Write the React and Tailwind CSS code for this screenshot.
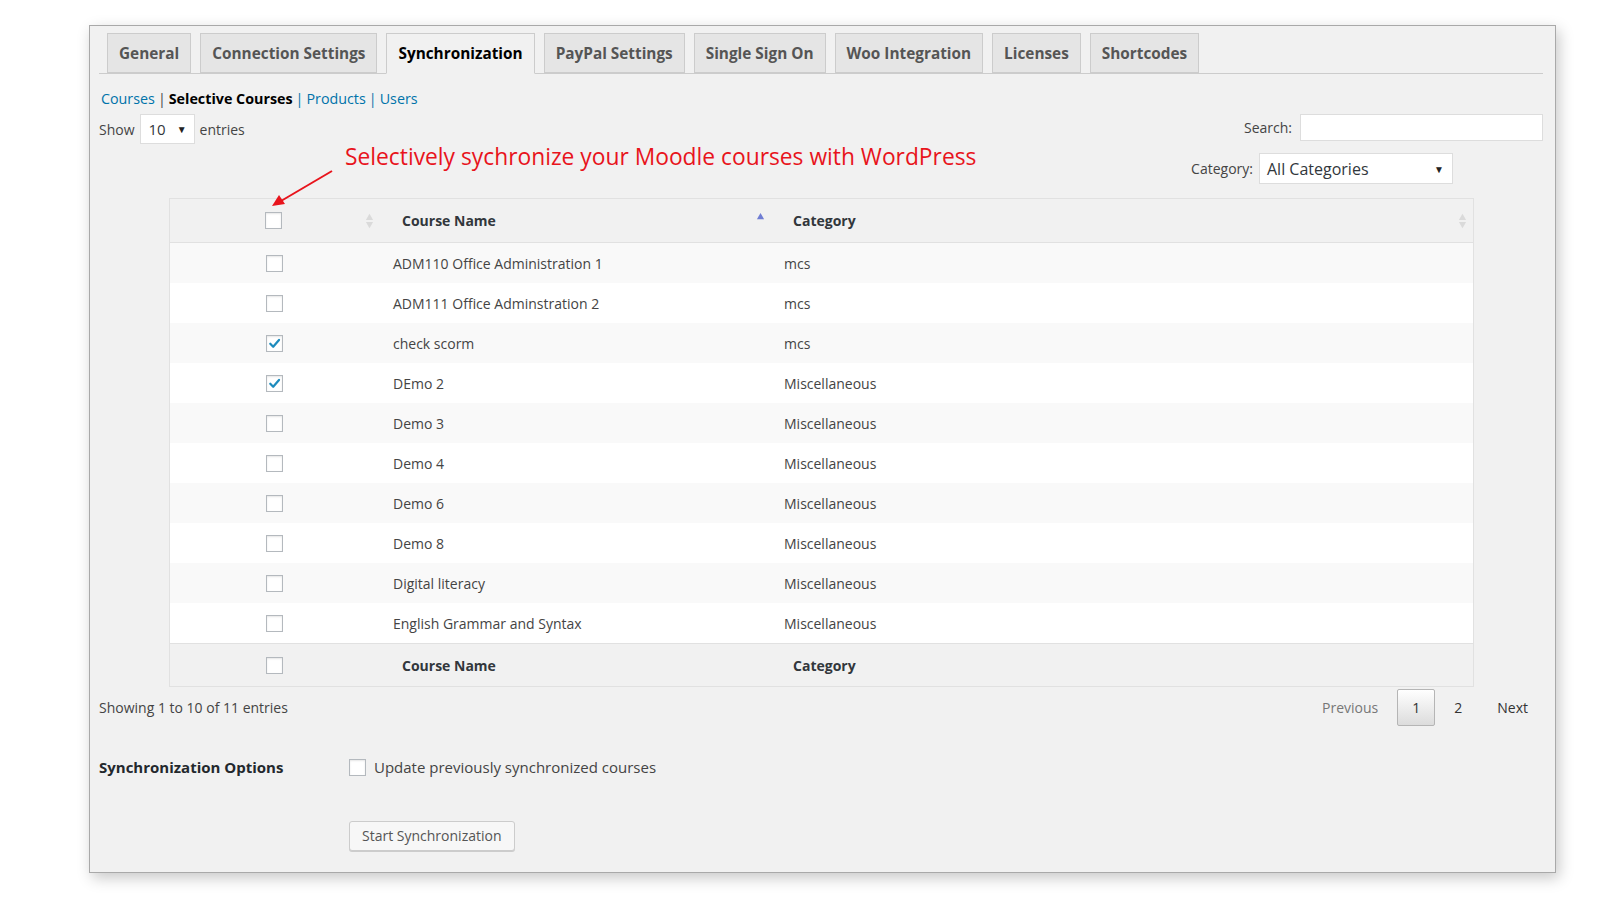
import React from 'react';

const courses = [
  { name: 'ADM110 Office Administration 1', category: 'mcs', checked: false },
  { name: 'ADM111 Office Adminstration 2', category: 'mcs', checked: false },
  { name: 'check scorm', category: 'mcs', checked: true },
  { name: 'DEmo 2', category: 'Miscellaneous', checked: true },
  { name: 'Demo 3', category: 'Miscellaneous', checked: false },
  { name: 'Demo 4', category: 'Miscellaneous', checked: false },
  { name: 'Demo 6', category: 'Miscellaneous', checked: false },
  { name: 'Demo 8', category: 'Miscellaneous', checked: false },
  { name: 'Digital literacy', category: 'Miscellaneous', checked: false },
  { name: 'English Grammar and Syntax', category: 'Miscellaneous', checked: false },
];

const tabs = ['General', 'Connection Settings', 'Synchronization', 'PayPal Settings', 'Single Sign On', 'Woo Integration', 'Licenses', 'Shortcodes'];

function Checkbox({ checked }) {
  return (
    <span className="flex h-[17px] w-[17px] items-center justify-center border border-[#b4b9be] bg-white shadow-[inset_0_1px_2px_rgba(0,0,0,0.1)]">
      {checked && (
        <svg viewBox="0 0 16 16" className="h-[15px] w-[15px]">
          <path d="M3.5 8.2 L6.6 11.4 L12.8 4.2" stroke="#1e8cbe" strokeWidth="2.4" fill="none" strokeLinecap="round" strokeLinejoin="round" />
        </svg>
      )}
    </span>
  );
}

function SortBoth() {
  return (
    <svg viewBox="0 0 10 20" className="h-[18px] w-[9px]">
      <path d="M5 2 L9 9 L1 9 Z" fill="#dadada" />
      <path d="M5 18 L9 11 L1 11 Z" fill="#dadada" />
    </svg>
  );
}

function SortAsc() {
  return (
    <svg viewBox="0 0 10 10" className="h-[9px] w-[9px]">
      <path d="M5 1 L9 8 L1 8 Z" fill="#6f7dd3" />
    </svg>
  );
}

function Caret() {
  return <span className="text-[10px] leading-none text-[#222]">▼</span>;
}

export default function App() {
  return (
    <div className="min-h-screen bg-white pl-[89px] pt-[25px] font-['Open_Sans',sans-serif] text-[#444]">
      <div className="relative h-[848px] w-[1467px] border border-[#a9a9a9] bg-[#f1f1f1] pl-[9px] pr-[12px] pt-[8px] shadow-[3px_5px_14px_rgba(0,0,0,0.22)]">
        {/* tabs */}
        <div className="flex h-[40px] items-end border-b border-[#ccc] pl-[8px]">
          {tabs.map((tab) => {
            const active = tab === 'Synchronization';
            return (
              <div
                key={tab}
                className={`mr-[9px] flex h-[40px] items-center border border-[#ccc] px-[11px] pt-[1px] text-[15.35px] font-bold ${active ? '-mb-px h-[41px] border-b-[#f1f1f1] bg-[#f1f1f1] text-[#000]' : 'bg-[#e5e5e5] text-[#555]'}`}
              >
                {tab}
              </div>
            );
          })}
        </div>

        {/* sub navigation */}
        <div className="mt-[15px] flex h-[20px] items-center pl-[2px] text-[14.3px]">
          <span className="text-[#0073aa]">Courses</span>
          <span className="mx-[3px] text-[#444]">|</span>
          <span className="font-bold text-[#000]">Selective Courses</span>
          <span className="mx-[3px] text-[#0073aa]">|</span>
          <span className="text-[#0073aa]">Products</span>
          <span className="mx-[3px] text-[#0073aa]">|</span>
          <span className="text-[#0073aa]">Users</span>
        </div>

        {/* show / search */}
        <div className="mt-[5px] flex items-start justify-between text-[14px]">
          <div className="flex items-center gap-[5px]">
            <span>Show</span>
            <div className="flex h-[30px] w-[55px] items-center justify-between border border-[#ddd] bg-white pl-[8px] pr-[7px] text-[15px] text-[#32373c]">
              <span>10</span>
              <Caret />
            </div>
            <span>entries</span>
          </div>
          <div className="flex items-center gap-[8px]">
            <span>Search:</span>
            <div className="h-[27px] w-[243px] border border-[#ddd] bg-white" />
          </div>
        </div>

        {/* annotation + category */}
        <div className="relative flex items-start justify-between">
          <span className="ml-[246px] text-[22.8px] leading-[26px] text-[#e8141c]">Selectively sychronize your Moodle courses with WordPress</span>
          <div className="mr-[90px] mt-[9px] flex items-center gap-[6px] text-[14px]">
            <span>Category:</span>
            <div className="flex h-[31px] w-[194px] items-center justify-between border border-[#ddd] bg-white pl-[7px] pr-[8px] text-[16px] text-[#32373c]">
              <span>All Categories</span>
              <Caret />
            </div>
          </div>
          <svg className="absolute left-[170px] top-[25px] h-[40px] w-[70px]" viewBox="0 0 70 40">
            <line x1="63" y1="2" x2="12" y2="32" stroke="#e8141c" strokeWidth="2" />
            <path d="M3 37 L10 26 L16 35 Z" fill="#e8141c" />
          </svg>
        </div>

        {/* table */}
        <div className="ml-[70px] mr-[69px] mt-[14px] border border-[#e1e1e1] text-[14px]">
          <div className="flex h-[44px] items-stretch border-b border-[#e1e1e1] bg-[#f1f1f1] font-bold text-[#32373c]">
            <div className="flex w-[209px] items-center justify-between pl-[95px] pr-[5px]">
              <Checkbox />
              <SortBoth />
            </div>
            <div className="relative flex w-[392px] items-center pl-[23px]">
              <span>Course Name</span>
              <span className="absolute right-[6px] top-[13px] flex"><SortAsc /></span>
            </div>
            <div className="flex flex-1 items-center justify-between pl-[22px] pr-[6px]">
              <span>Category</span>
              <SortBoth />
            </div>
          </div>

          {courses.map((course, index) => (
            <div key={course.name} className={`flex h-[40px] items-center ${index % 2 === 0 ? 'bg-[#f9f9f9]' : 'bg-white'}`}>
              <div className="flex w-[209px] justify-center">
                <Checkbox checked={course.checked} />
              </div>
              <div className="w-[392px] pl-[14px]">{course.name}</div>
              <div className="flex-1 pl-[13px]">{course.category}</div>
            </div>
          ))}

          <div className="flex h-[43px] items-center border-t border-[#e1e1e1] bg-[#f1f1f1] font-bold text-[#32373c]">
            <div className="flex w-[209px] justify-center">
              <Checkbox />
            </div>
            <div className="w-[392px] pl-[23px]">Course Name</div>
            <div className="flex-1 pl-[22px]">Category</div>
          </div>
        </div>

        {/* info + pagination */}
        <div className="mt-[2px] flex items-center justify-between text-[14px]">
          <span>Showing 1 to 10 of 11 entries</span>
          <div className="mr-[15px] flex items-center">
            <span className="mr-[19px] text-[#777]">Previous</span>
            <span className="flex h-[37px] w-[38px] items-center justify-center rounded-[2px] border border-[#b5b5b5] bg-gradient-to-b from-white to-[#dcdcdc] text-[#333]">1</span>
            <span className="ml-[19px] mr-[35px] text-[#333]">2</span>
            <span className="text-[#333]">Next</span>
          </div>
        </div>

        {/* synchronization options */}
        <div className="mt-[30px] flex items-center">
          <span className="w-[250px] text-[15px] font-bold text-[#23282d]">Synchronization Options</span>
          <div className="flex items-center gap-[8px] text-[15px]">
            <Checkbox />
            <span>Update previously synchronized courses</span>
          </div>
        </div>

        <div className="ml-[250px] mt-[42px]">
          <button type="button" className="h-[30px] rounded-[3px] border border-[#ccc] bg-[#f7f7f7] px-[12px] text-[14px] text-[#555] shadow-[0_1px_0_#ccc]">
            Start Synchronization
          </button>
        </div>
      </div>
    </div>
  );
}
